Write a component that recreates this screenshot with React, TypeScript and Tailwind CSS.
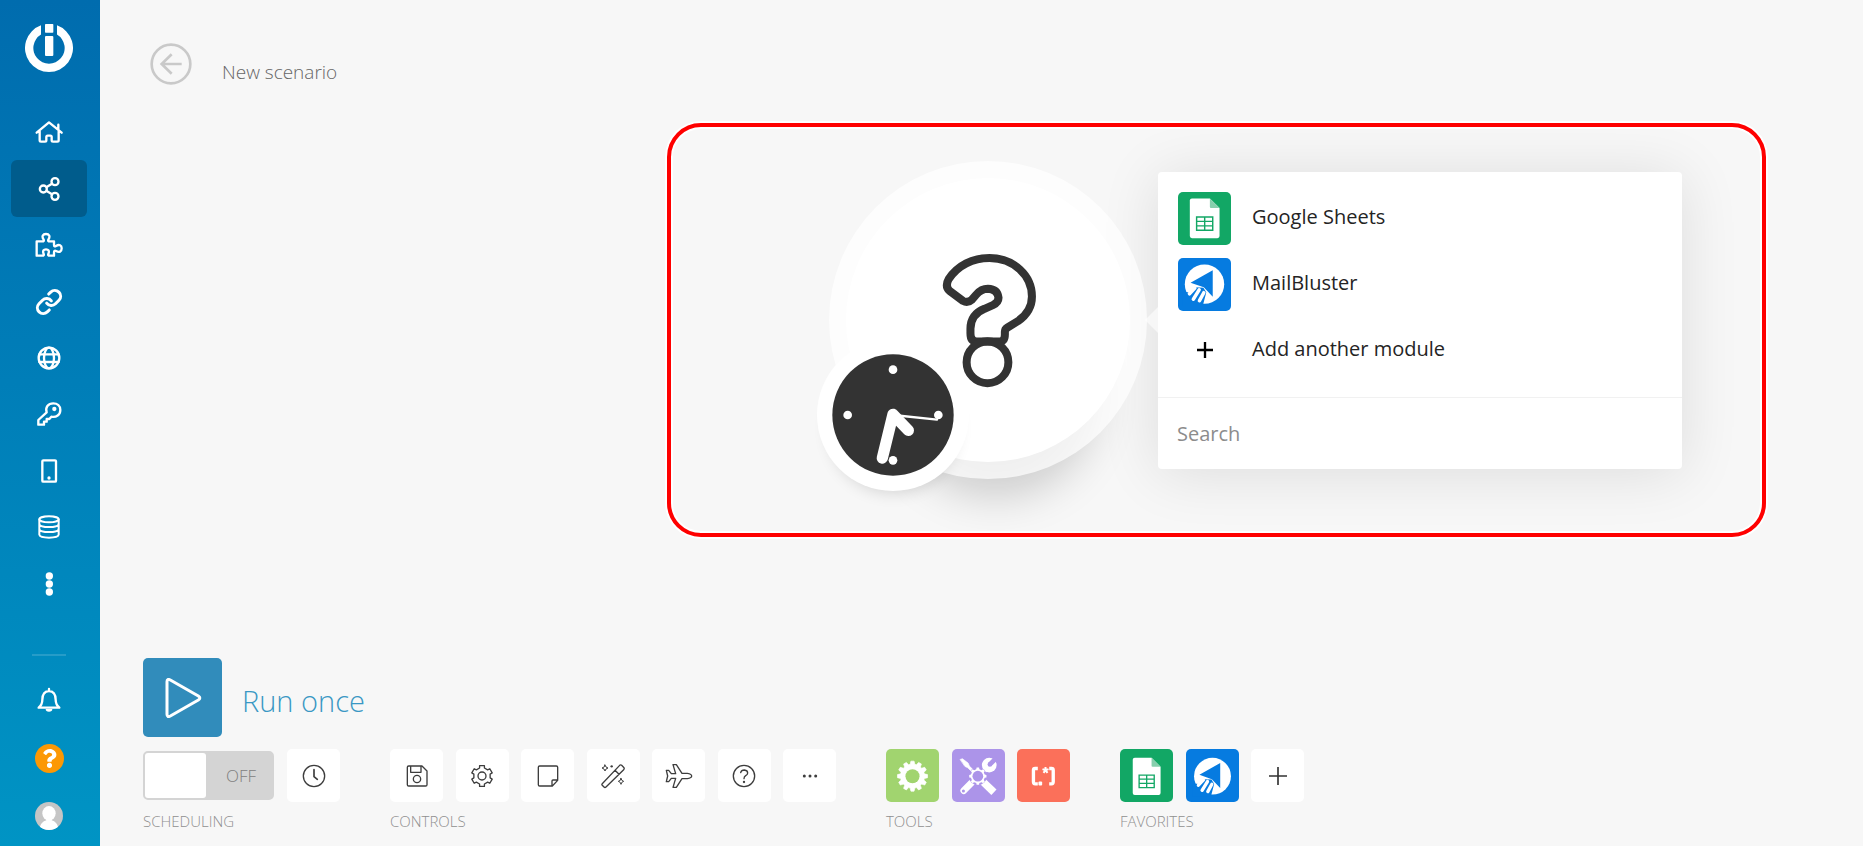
import type { ReactNode } from "react";
import { Link as LinkIcon } from "lucide-react";
import { FaQuestion } from "react-icons/fa";

function gearPath(cx: number, cy: number, teeth: number, inner: number, outer: number, halfInner: number, halfOuter: number) {
  const at = (radius: number, degrees: number) => {
    const a = ((degrees - 90) * Math.PI) / 180;
    return `${(cx + radius * Math.cos(a)).toFixed(1)} ${(cy + radius * Math.sin(a)).toFixed(1)}`;
  };
  const points: string[] = [];
  for (let i = 0; i < teeth; i++) {
    const mid = (360 / teeth) * i;
    points.push(at(inner, mid - halfInner), at(outer, mid - halfOuter), at(outer, mid + halfOuter), at(inner, mid + halfInner));
  }
  return `M${points.join("L")}Z`;
}

function Glyph({ children, weight = 7 }: { children: ReactNode; weight?: number }) {
  return (
    <svg
      viewBox="0 0 90 90"
      className="size-[30px]"
      fill="none"
      stroke="currentColor"
      strokeWidth={weight}
      strokeLinecap="round"
      strokeLinejoin="round"
      aria-hidden="true"
    >
      {children}
    </svg>
  );
}

const navItems: { label: string; active?: boolean; icon: ReactNode }[] = [
  {
    label: "Home",
    icon: (
      <Glyph>
        <path d="M8 47 L45 16 L83 47 M73 23 V37 M17 43 V70 Q17 74 21 74 H33 Q37 74 37 70 V60 Q37 56 41 56 H49 Q53 56 53 60 V70 Q53 74 57 74 H70 Q74 74 74 70 V43" />
      </Glyph>
    ),
  },
  {
    label: "Scenarios",
    active: true,
    icon: (
      <Glyph>
        <circle cx="28" cy="45" r="10.500" />
        <circle cx="63" cy="23" r="10.500" />
        <circle cx="63" cy="67" r="10.500" />
        <path d="M38 39 L54 29 M38 51 L54 61" />
      </Glyph>
    ),
  },
  {
    label: "Templates",
    icon: (
      <Glyph>
        <path d="M8 34 H25 Q31 34 29 29 C22 18 27 12 36 12 C45 12 50 18 43 29 Q41 34 47 34 H60 V44 Q60 52 66 48 C76 42 83 46 83 55 C83 65 76 69 66 63 Q60 60 60 68 V77 H47 Q41 77 43 72 C47 62 43 58 36 58 C29 58 25 62 29 72 Q31 77 25 77 H8 Z" />
      </Glyph>
    ),
  },
  { label: "Connections", icon: <LinkIcon className="size-7" strokeWidth={2.6} aria-hidden="true" /> },
  {
    label: "Webhooks",
    icon: (
      <Glyph>
        <circle cx="45" cy="45" r="31" />
        <ellipse cx="45" cy="45" rx="15" ry="31" />
        <path d="M16 34 H74 M16 57 H74" />
      </Glyph>
    ),
  },
  {
    label: "Keys",
    icon: (
      <Glyph>
        <path d="M13 63 L38 40 C33 25 42 13 58 13 C70 13 79 21 79 33 C79 47 67 56 52 53 L46 60 H38 V68 H30 V77 H13 Z" />
        <circle cx="61" cy="30" r="6.500" fill="currentColor" stroke="none" />
      </Glyph>
    ),
  },
  {
    label: "Devices",
    icon: (
      <Glyph>
        <rect x="25" y="13" width="41" height="64" rx="3" />
        <circle cx="45" cy="66" r="5" fill="currentColor" stroke="none" />
      </Glyph>
    ),
  },
  {
    label: "Data stores",
    icon: (
      <Glyph weight={6}>
        <ellipse cx="45" cy="22" rx="29" ry="9" />
        <path d="M16 22 V68 C18 80 72 80 74 68 V22 M16 37 C20 48 70 48 74 37 M16 52 C20 63 70 63 74 52" />
      </Glyph>
    ),
  },
  {
    label: "More",
    icon: (
      <Glyph>
        <g fill="currentColor" stroke="none">
          <circle cx="46" cy="21" r="11" />
          <circle cx="46" cy="45" r="11" />
          <circle cx="46" cy="69" r="11" />
        </g>
      </Glyph>
    ),
  },
];

function Sidebar() {
  return (
    <aside className="flex w-[100px] shrink-0 flex-col items-center bg-linear-to-b from-[#006cae] to-[#0094c4] pt-6 pr-[13px] pb-4 pl-[11px] text-white">
      <a href="#home" aria-label="Integromat" className="block">
        <svg viewBox="-72 -72 144 144" className="size-12" fill="currentColor" aria-hidden="true">
          <path d="M-24 -67.9 A72 72 0 1 0 24 -67.9 V-40.4 A47 47 0 1 1 -24 -40.4 Z" />
          <rect x="-12" y="-72" width="25" height="26" rx="2" />
          <rect x="-12" y="-36" width="25" height="60" rx="3" />
        </svg>
      </a>
      <nav aria-label="Main" className="mt-8 flex h-[508px] w-full flex-col">
        {navItems.map((item) => (
          <a
            key={item.label}
            href={`#${item.label.toLowerCase().replace(" ", "-")}`}
            aria-label={item.label}
            className={
              item.active
                ? "flex flex-1 items-center justify-center rounded-md bg-[#005c8c]"
                : "flex flex-1 items-center justify-center rounded-md"
            }
          >
            {item.icon}
          </a>
        ))}
      </nav>
      <div className="mt-auto h-0.5 w-[34px] bg-white/15" />
      <button type="button" aria-label="Notifications" className="mt-[29px]">
        <Glyph>
          <path d="M14 68 C22 61 25 55 25 44 C25 28 33 18 45 18 C57 18 65 28 65 44 C65 55 68 61 76 68 Z M45 12 V17" />
          <path d="M35 72 a10 8 0 0 0 20 0 Z" fill="currentColor" stroke="none" />
        </Glyph>
      </button>
      <button type="button" aria-label="Help" className="mt-[29px] flex size-[29px] items-center justify-center rounded-full bg-[#fc9804]">
        <FaQuestion className="size-[19px]" aria-hidden="true" />
      </button>
      <button type="button" aria-label="Profile" className="mt-[29px] size-7 overflow-hidden rounded-full bg-[#c5c5c5]">
        <svg viewBox="0 0 84 84" className="size-7" fill="#fff" aria-hidden="true">
          <ellipse cx="42" cy="34" rx="20" ry="22" />
          <path d="M14 84 C14 66 24 58 34 55 V48 H50 V55 C60 58 70 66 70 84 Z" />
        </svg>
      </button>
    </aside>
  );
}

function SheetsLogo({ viewBox }: { viewBox: string }) {
  return (
    <svg viewBox={viewBox} className="size-full" aria-hidden="true">
      <path d="M48 26 H98 L125 53 V131 Q125 137 119 137 H48 Q42 137 42 131 V32 Q42 26 48 26 Z" fill="#fff" />
      <path d="M98 26 L125 53 H101 Q98 53 98 50 Z" fill="#87cfad" />
      <path d="M61 78 H106 V115 H61 Z M61 90 H106 M61 102.500 H106 M83.500 78 V115" fill="none" stroke="#12a765" strokeWidth="4" />
    </svg>
  );
}

function MailLogo({ viewBox }: { viewBox: string }) {
  return (
    <svg viewBox={viewBox} className="size-full" aria-hidden="true">
      <circle cx="79" cy="81" r="55" fill="#fff" />
      <path d="M18 102 L38 104 L52 90 L76 91 L84 104 L74 142 L18 142 Z" fill="#067be0" />
      <path d="M52 92 L37 108 M64 97 L48 123 M77 105 L65 127" stroke="#fff" strokeWidth="10" strokeLinecap="round" />
      <path d="M40 77 L102 42 V116 L77 90 Z" fill="#067be0" />
    </svg>
  );
}

function ModuleNode() {
  return (
    <button
      type="button"
      aria-label="Choose a module"
      className="relative z-10 mt-1.5 flex size-[284px] shrink-0 items-center justify-center rounded-full bg-white pl-[3px] shadow-[0_0_0_17px_rgba(255,255,255,0.7),8px_76px_44px_-42px_rgba(0,0,0,0.18)]"
    >
      <svg
        viewBox="845 425 290 410"
        className="h-[137px] w-[97px]"
        fill="none"
        stroke="#333"
        strokeWidth="24"
        strokeLinejoin="round"
        aria-hidden="true"
      >
        <path d="M868 506 C895 465 940 443 990 443 C1062 443 1117 495 1117 558 C1117 592 1098 616 1075 632 L1044 651 Q1036 656 1036 664 V672 Q1036 693 1018 693 H952 Q933 693 933 668 V655 C933 625 950 605 975 595 L1000 584 Q1017 576 1017 562 Q1014 536 985 535 Q965 535 950 553 L938 567 Q925 579 910 571 L870 541 Q856 527 868 506 Z" />
        <circle cx="984" cy="755" r="62.500" />
      </svg>
      <span className="absolute top-[161px] left-[-29px] flex size-[152px] items-center justify-center rounded-full bg-white shadow-[0_14px_16px_-12px_rgba(0,0,0,0.14)]">
        <svg viewBox="-183 -183 366 366" className="size-[122px]" stroke="#fff" strokeLinecap="round" aria-hidden="true">
          <circle r="182" fill="#333" stroke="none" />
          <g fill="#fff" stroke="none">
            <circle cy="-136" r="13" />
            <circle cx="136" r="13" />
            <circle cy="136" r="13" />
            <circle cx="-136" r="13" />
          </g>
          <path d="M0 -2 L-32 129 M0 -2 L46 46" strokeWidth="34" />
          <path d="M0 0 L132 14" strokeWidth="7" />
        </svg>
      </span>
    </button>
  );
}

function ModulePicker() {
  const rowClass = "flex w-full items-center gap-[21px] text-left text-xl leading-7 text-[#242424]";
  return (
    <div className="relative flex-1 rounded bg-white shadow-[0_4px_60px_rgba(0,0,0,0.11)]">
      <span className="absolute top-[135px] left-[-13px] border-y-[13px] border-r-[13px] border-y-transparent border-r-white/60" />
      <ul className="flex flex-col gap-[13px] p-5">
        <li>
          <button type="button" className={rowClass}>
            <span className="size-[53px] overflow-hidden rounded-[5px] bg-[#12a765]">
              <SheetsLogo viewBox="9 8 148 148" />
            </span>
            <span className="pb-1">Google Sheets</span>
          </button>
        </li>
        <li>
          <button type="button" className={rowClass}>
            <span className="size-[53px] overflow-hidden rounded-[5px] bg-[#067be0]">
              <MailLogo viewBox="5 8 148 148" />
            </span>
            <span className="pb-1">MailBluster</span>
          </button>
        </li>
        <li>
          <button type="button" className={rowClass}>
            <span className="flex size-[53px] items-center justify-center pb-0.5 text-black">
              <svg viewBox="0 0 54 54" className="size-[18px]" stroke="currentColor" strokeWidth="7" aria-hidden="true">
                <path d="M27 3 V51 M3 27 H51" />
              </svg>
            </span>
            <span className="pb-1">Add another module</span>
          </button>
        </li>
      </ul>
      <div className="border-t border-[#f1f1f1]">
        <input
          type="search"
          aria-label="Search modules"
          placeholder="Search"
          className="block h-[71px] w-full bg-transparent px-[19px] text-xl text-[#333] outline-none placeholder:text-[#8c8c8c]"
        />
      </div>
    </div>
  );
}

const controls: { label: string; icon: ReactNode }[] = [
  {
    label: "Save",
    icon: (
      <>
        <path d="M20 15 H60 L75 30 V71 Q75 75 71 75 H20 Q16 75 16 71 V19 Q16 15 20 15 Z M26 15 V34 H57 V15" />
        <circle cx="45" cy="54" r="11" />
      </>
    ),
  },
  {
    label: "Settings",
    icon: (
      <>
        <path d={gearPath(45, 45, 6, 25, 32, 17, 13)} />
        <circle cx="45" cy="45" r="12" />
      </>
    ),
  },
  {
    label: "Notes",
    icon: <path d="M20 15 H70 Q74 15 74 19 V58 L58 75 H20 Q16 75 16 71 V19 Q16 15 20 15 Z M74 57 H60 Q57 57 57 60 V75" />,
  },
  {
    label: "Auto-align",
    icon: (
      <>
        <path d="M12 69 L65 13 Q68 10 71 13 L78 20 Q80 23 77 26 L24 78 Q21 81 18 78 L12 72 Q11 70 12 69 Z M51 28 L63 40" />
        <path d="M21 12 L24 18 L30 21 L24 24 L21 30 L18 24 L12 21 L18 18 Z M69 52 L71.500 58 L77 61 L71.500 64 L69 70 L66.500 64 L61 61 L66.500 58 Z" strokeWidth="3" />
        <circle cx="41" cy="16" r="3.500" fill="currentColor" stroke="none" />
      </>
    ),
  },
  {
    label: "Explain flow",
    icon: (
      <path d="M7 28 H14 L22 38 H35 L27 11 H37 L54 37 H70 Q83 39 83 45 Q83 51 70 53 H54 L37 79 H27 L35 52 H22 L14 62 H7 L11 45 Z" />
    ),
  },
  {
    label: "Help",
    icon: (
      <>
        <circle cx="45" cy="45" r="32" />
        <path d="M35 35 Q37 27 46 27 Q56 28 56 36 Q56 41 50 44 Q45 47 45 53" />
        <circle cx="45" cy="63" r="3.500" fill="currentColor" stroke="none" />
      </>
    ),
  },
  {
    label: "More",
    icon: (
      <g fill="currentColor" stroke="none">
        <circle cx="28" cy="45" r="4.500" />
        <circle cx="45" cy="45" r="4.500" />
        <circle cx="62" cy="45" r="4.500" />
      </g>
    ),
  },
];

const tileClass = "flex size-[53px] items-center justify-center overflow-hidden rounded-[5px]";

function ToolGroup({ title, className, children }: { title: string; className: string; children: ReactNode }) {
  return (
    <section className={className}>
      <div className="flex items-center justify-between">{children}</div>
      <h2 className="mt-[9px] text-[15px] leading-5 font-light text-[#8f8f8f]">{title}</h2>
    </section>
  );
}

function Toolbar() {
  return (
    <footer className="mt-auto pb-[15px] pl-[43px]">
      <button type="button" className="flex items-end gap-5">
        <span className="flex size-[79px] items-center justify-center rounded-[5px] bg-[#318cbb] text-white">
          <svg viewBox="0 0 120 120" className="size-10" fill="none" stroke="currentColor" strokeWidth="9" strokeLinejoin="round" aria-hidden="true">
            <path d="M12 11 Q12 1 22 6 L106 54 Q115 60 106 66 L22 114 Q12 119 12 109 Z" />
          </svg>
        </span>
        <span className="text-[29px] leading-[72px] font-light text-[#3a97c4]">Run once</span>
      </button>
      <div className="mt-3 flex flex-wrap gap-[50px]">
        <ToolGroup title="SCHEDULING" className="w-[197px]">
          <button
            type="button"
            role="switch"
            aria-checked="false"
            aria-label="Scheduling"
            className="flex h-[49px] w-[131px] rounded-[5px] border-2 border-[#d4d4d4] bg-[#d4d4d4]"
          >
            <span className="h-full w-[61px] rounded-[3px] bg-white" />
            <span className="flex-1 self-center pl-1 text-[17px] font-light text-[#808080]">OFF</span>
          </button>
          <button type="button" aria-label="Schedule settings" className={`${tileClass} bg-white text-[#3d3d3d]`}>
            <Glyph weight={4}>
              <circle cx="45" cy="45" r="32" />
              <path d="M45 26 V47 L55 55" strokeWidth="5" />
            </Glyph>
          </button>
        </ToolGroup>
        <ToolGroup title="CONTROLS" className="w-[446px]">
          {controls.map((control) => (
            <button key={control.label} type="button" aria-label={control.label} className={`${tileClass} bg-white text-[#3d3d3d]`}>
              <Glyph weight={4}>{control.icon}</Glyph>
            </button>
          ))}
        </ToolGroup>
        <ToolGroup title="TOOLS" className="w-[184px]">
          <button type="button" aria-label="Flow control" className={`${tileClass} bg-[#a1d46f]`}>
            <svg viewBox="0 0 158 158" className="size-full" aria-hidden="true">
              <path d={gearPath(79, 81, 12, 36, 45, 11, 6)} fill="#fff" stroke="#fff" strokeWidth="2" strokeLinejoin="round" />
              <circle cx="79" cy="81" r="21" fill="#a1d46f" />
            </svg>
          </button>
          <button type="button" aria-label="Tools" className={`${tileClass} bg-[#ac94e9]`}>
            <svg viewBox="0 0 158 158" className="size-full" strokeLinecap="round" aria-hidden="true">
              <path d="M25 31 L31 29 L48 42 L52 51 L66 65 L61 70 L47 56 L39 52 Z" fill="#fff" stroke="#fff" strokeWidth="2" />
              <path d="M90 71 L108 52" stroke="#fff" strokeWidth="15" />
              <circle cx="111" cy="48" r="22" fill="#fff" />
              <path d="M113 46 L133 26" stroke="#ac94e9" strokeWidth="14" strokeLinecap="butt" />
              <circle cx="113" cy="46" r="7" fill="#ac94e9" />
              <path d="M60 99 L35 124" stroke="#fff" strokeWidth="20" />
              <circle cx="34" cy="125" r="4.500" fill="#ac94e9" />
              <path d="M92 97 L125 129" stroke="#fff" strokeWidth="22" strokeLinecap="butt" />
              <circle cx="77" cy="81" r="27" fill="#ac94e9" />
              <path d={gearPath(77, 81, 8, 21, 26, 13, 8)} fill="#fff" />
              <circle cx="77" cy="81" r="16" fill="#ac94e9" />
            </svg>
          </button>
          <button type="button" aria-label="Text parser" className={`${tileClass} bg-[#fb705a]`}>
            <svg viewBox="0 0 158 158" className="size-full" fill="none" stroke="#fff" strokeWidth="10" aria-hidden="true">
              <path d="M62 58 H54 Q49 58 49 63 V98 Q49 104 54 104 H62 M96 58 H103 Q108 58 108 63 V98 Q108 104 103 104 H96" />
              <path d="M85 54 V63 M76 60 L85 63 L94 60 M79 71 L85 63 L91 71" strokeWidth="6" />
              <rect x="64" y="97" width="11" height="12" rx="3" fill="#fff" stroke="none" />
            </svg>
          </button>
        </ToolGroup>
        <ToolGroup title="FAVORITES" className="w-[184px]">
          <button type="button" aria-label="Google Sheets" className={`${tileClass} bg-[#12a765]`}>
            <SheetsLogo viewBox="4 0 158 158" />
          </button>
          <button type="button" aria-label="MailBluster" className={`${tileClass} bg-[#067be0]`}>
            <MailLogo viewBox="0 0 158 158" />
          </button>
          <button type="button" aria-label="Add favorite" className={`${tileClass} bg-white text-[#333]`}>
            <svg viewBox="0 0 54 54" className="size-[18px]" stroke="currentColor" strokeWidth="5" aria-hidden="true">
              <path d="M27 0 V54 M0 27 H54" />
            </svg>
          </button>
        </ToolGroup>
      </div>
    </footer>
  );
}

export default function App() {
  return (
    <div className="flex min-h-screen bg-[#f7f7f7] font-['Open_Sans','Noto_Sans',sans-serif]">
      <Sidebar />
      <main className="flex min-w-0 flex-1 flex-col">
        <header className="flex items-end gap-[30px] pt-[43px] pl-[50px]">
          <button type="button" aria-label="Back" className="text-[#c9c9c9]">
            <svg viewBox="0 0 126 126" className="size-[42px]" fill="none" stroke="currentColor" strokeWidth="8" aria-hidden="true">
              <circle cx="63" cy="63" r="58" />
              <path d="M95 63 H35 M65 34 L35 63 L65 92" />
            </svg>
          </button>
          <h1 className="text-[19px] leading-[26px] font-light text-[#666]">New scenario</h1>
        </header>
        <section
          aria-label="Scenario editor"
          className="mt-[38px] mr-[97px] mb-8 ml-auto flex w-[1099px] items-start gap-7 rounded-[34px] border-4 border-[#f00] pt-[45px] pr-20 pb-16 pl-[175px] shadow-[0_0_0_2px_#fff,inset_0_0_0_2px_#fff]"
        >
          <ModuleNode />
          <ModulePicker />
        </section>
        <Toolbar />
      </main>
    </div>
  );
}
